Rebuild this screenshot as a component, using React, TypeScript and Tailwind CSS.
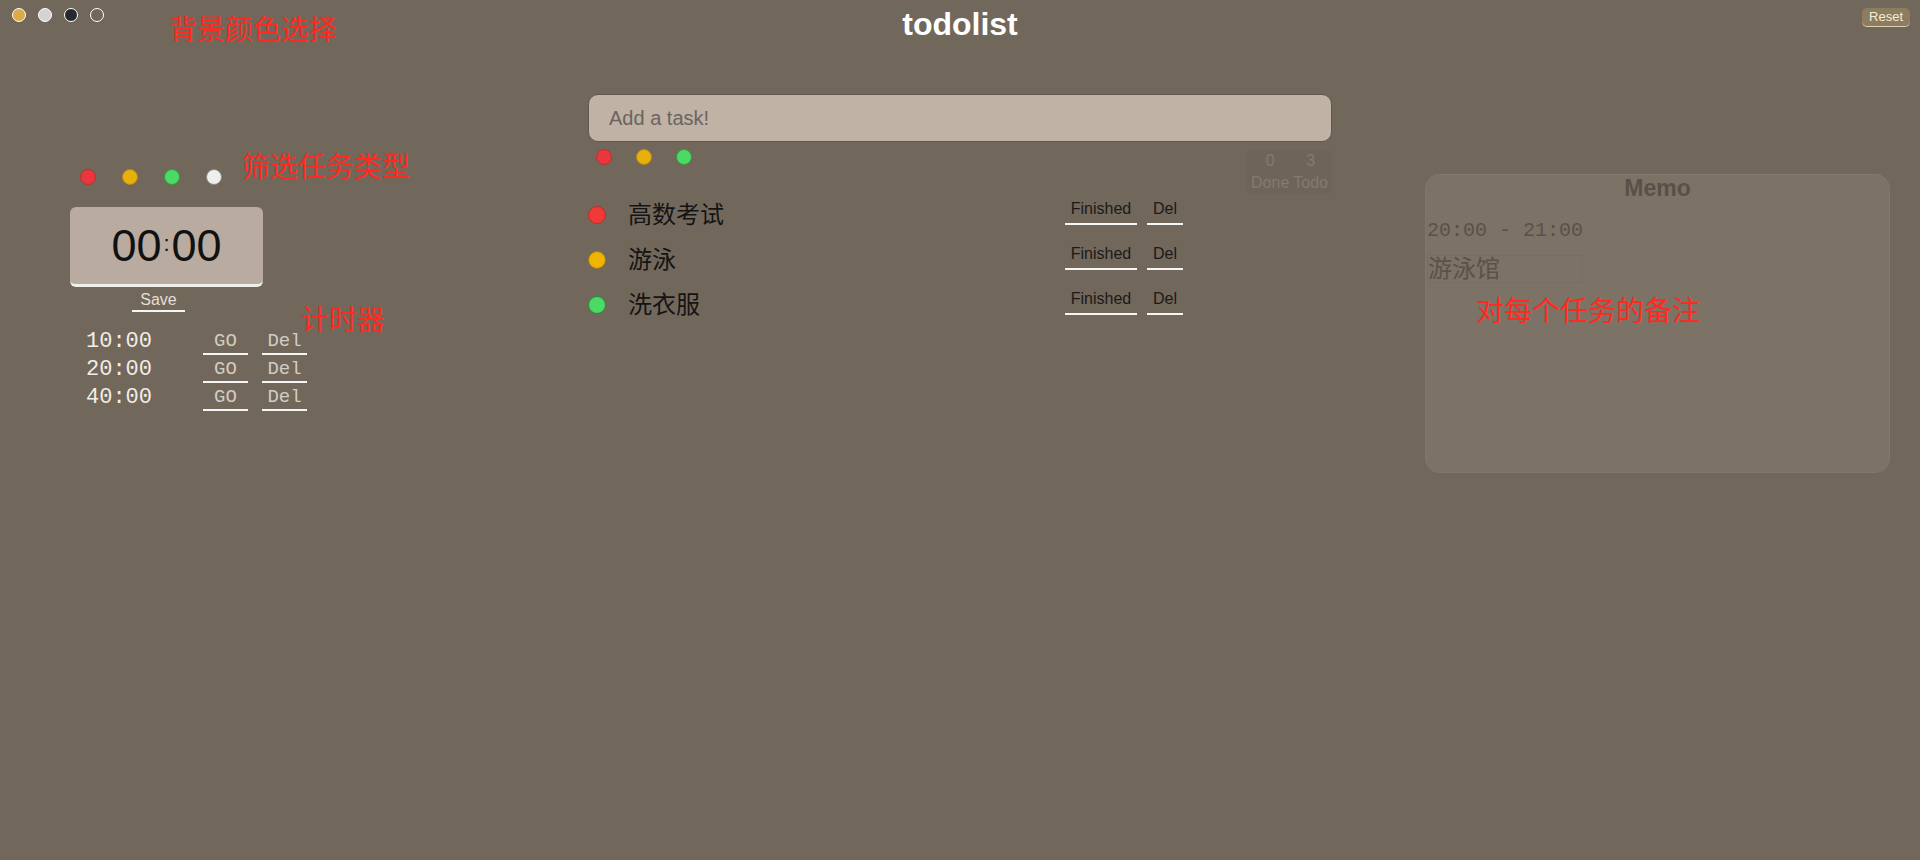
import React from 'react';

const bgDots = [
    'bg-[#dcaa48]',
    'bg-[#d3d3d3]',
    'bg-[#26282c]',
    'bg-transparent',
];

const filterDots = [
    'bg-[#e8383d] border-[#c0302f]',
    'bg-[#e8b00c] border-[#b88a10]',
    'bg-[#4cd964] border-[#2ea043]',
    'bg-[#efefef] border-[#8a8a8a]',
];

const timers = ['10:00', '20:00', '40:00'];

const tasks = [
    { name: '高数考试', dot: 'bg-[#f03a3a] border-[#c02a2a]' },
    { name: '游泳', dot: 'bg-[#f0b400] border-[#9a7a20]' },
    { name: '洗衣服', dot: 'bg-[#4cd964] border-[#2a8a3a]' },
];

const Note: React.FC<{ className: string; children: React.ReactNode }> = ({ className, children }) => (
    <span className={`absolute text-[28px] leading-[28px] text-[#ff2a1f] whitespace-nowrap ${className}`}>
        {children}
    </span>
);

const App: React.FC = () => {
    return (
        <div className="relative h-[860px] w-full overflow-hidden bg-[#72675b] font-['Liberation_Sans','Noto_Sans_CJK_SC',sans-serif]">
            {/* header */}
            <header className="grid h-[48px] grid-cols-[1fr_auto_1fr] items-start pt-[8px]">
                <div className="flex gap-[12px] pl-[12px]">
                    {bgDots.map((c, i) => (
                        <span key={i} className={`h-[14px] w-[14px] rounded-full border-[1.5px] border-white ${c}`} />
                    ))}
                </div>
                <h1 className="text-[32px] font-bold leading-[32px] text-white">todolist</h1>
                <div className="flex justify-end pr-[10px]">
                    <button className="h-[19px] rounded-[5px] border-b border-[#ddd0b6] bg-[#8e7c5f] px-[7px] text-[13px] leading-[18px] text-[#f5ecd8]">
                        Reset
                    </button>
                </div>
            </header>

            <main className="flex">
                {/* timer column */}
                <section className="w-[588px] pl-[70px] pt-[121px]">
                    <div className="flex gap-[26px] pl-[10px]">
                        {filterDots.map((c, i) => (
                            <span key={i} className={`h-[16px] w-[16px] rounded-full border-[1.5px] ${c}`} />
                        ))}
                    </div>
                    <div className="mt-[22px] flex h-[80px] w-[193px] items-center justify-center gap-[2px] rounded-[6px] border-b-[3px] border-[#f2eeea] bg-[#b9ab9f] text-[#111]">
                        <span className="text-[45px] leading-[50px]">00</span>
                        <span className="mb-[4px] text-[22px] leading-[22px]">:</span>
                        <span className="text-[45px] leading-[50px]">00</span>
                    </div>
                    <button className="ml-[62px] mt-[2px] h-[23px] w-[53px] border-b-2 border-[#f5f5f5] text-[16px] leading-[20px] text-[#e6ded5]">
                        Save
                    </button>
                    <div className="mt-[16px] flex flex-col">
                        {timers.map((t) => (
                            <div key={t} className="flex h-[28px] items-center">
                                <span className="w-[133px] pl-[16px] font-['Liberation_Mono',monospace] text-[22px] leading-[28px] text-[#f2ede6]">
                                    {t}
                                </span>
                                <button className="h-[26px] w-[45px] border-b-2 border-[#f5f5f5] font-['Liberation_Mono',monospace] text-[19px] leading-[24px] text-[#d4ccc2]">
                                    GO
                                </button>
                                <button className="ml-[14px] h-[26px] w-[45px] border-b-2 border-[#f5f5f5] font-['Liberation_Mono',monospace] text-[19px] leading-[24px] text-[#d4ccc2]">
                                    Del
                                </button>
                            </div>
                        ))}
                    </div>
                </section>

                {/* task column */}
                <section className="w-[744px] pt-[46px]">
                    <input
                        className="h-[48px] w-full rounded-[10px] border border-[#62584e] bg-[#c0b2a5] px-[20px] text-[20px] text-[#222] outline-none placeholder:text-[#6b6460]"
                        placeholder="Add a task!"
                    />
                    <div className="mt-[7px] flex items-start justify-between">
                        <div className="flex gap-[24px] pl-[8px]">
                            {filterDots.slice(0, 3).map((c, i) => (
                                <span key={i} className={`h-[16px] w-[16px] rounded-full border-[1.5px] ${c}`} />
                            ))}
                        </div>
                        <div className="mt-[1px] flex gap-[4px] rounded-[4px] bg-black/[0.02] px-[4px] text-[16px] leading-[22px] text-[#857a6d]">
                            <div className="flex flex-col items-center">
                                <span>0</span>
                                <span>Done</span>
                            </div>
                            <div className="flex flex-col items-center">
                                <span>3</span>
                                <span>Todo</span>
                            </div>
                        </div>
                    </div>
                    <ul className="-mt-[2px]">
                        {tasks.map((t) => (
                            <li key={t.name} className="flex h-[45px] items-center">
                                <span className={`h-[18px] w-[18px] rounded-full border-[1.5px] ${t.dot}`} />
                                <span className="ml-[22px] w-[437px] text-[24px] leading-[30px] text-[#141414]">{t.name}</span>
                                <button className="mb-[6px] h-[26px] w-[72px] border-b-2 border-[#f5f5f5] pb-[4px] text-[16px] leading-[20px] text-[#1a1a1a]">
                                    Finished
                                </button>
                                <button className="mb-[6px] ml-[10px] h-[26px] w-[36px] border-b-2 border-[#f5f5f5] pb-[4px] text-[16px] leading-[20px] text-[#1a1a1a]">
                                    Del
                                </button>
                            </li>
                        ))}
                    </ul>
                </section>

                {/* memo */}
                <section className="ml-[93px] pt-[126px]">
                    <div className="h-[299px] w-[465px] rounded-[15px] border border-white/[0.04] bg-[#7d7266] px-[1px]">
                        <h2 className="-mt-[1px] text-center text-[23px] font-bold leading-[28px] text-[#5a5047]">Memo</h2>
                        <div className="mt-[15px] font-['Liberation_Mono',monospace] text-[20px] leading-[28px] text-[#5b5148]">
                            20:00 - 21:00
                        </div>
                        <div className="mt-[10px] w-[156px] border border-black/[0.03] text-[24px] leading-[26px] text-[#5b5148]">
                            游泳馆
                        </div>
                    </div>
                </section>
            </main>

            <Note className="left-[169px] top-[17px]">背景颜色选择</Note>
            <Note className="left-[242px] top-[154px]">筛选任务类型</Note>
            <Note className="left-[301px] top-[307px]">计时器</Note>
            <Note className="left-[1476px] top-[298px]">对每个任务的备注</Note>
        </div>
    );
};

export default App;
